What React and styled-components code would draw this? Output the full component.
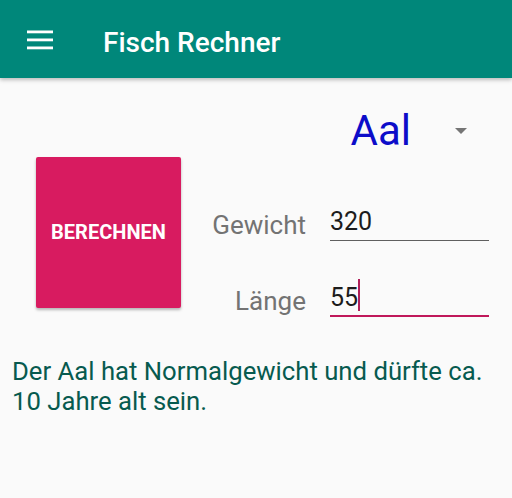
import React from 'react';
import styled, { createGlobalStyle } from 'styled-components';

const GlobalStyle = createGlobalStyle`
  html, body {
    margin: 0;
    padding: 0;
    background: #fafafa;
    font-family: Roboto, "Noto Sans", "Liberation Sans", sans-serif;
  }
`;

const Screen = styled.div`
  width: 512px;
  height: 498px;
  background: #fafafa;
  overflow: hidden;
`;

const AppBar = styled.header`
  display: flex;
  align-items: center;
  height: 78px;
  padding-left: 27px;
  box-sizing: border-box;
  background: #00877a;
  box-shadow: 0 2px 4px rgba(0, 0, 0, 0.25);
  position: relative;
`;

const MenuButton = styled.svg`
  display: block;
  width: 26px;
  height: 20px;
  margin-top: 1px;
`;

const Title = styled.h1`
  margin: 6px 0 0 50px;
  font-size: 28px;
  font-weight: 500;
  color: #ffffff;
`;

const Content = styled.main`
  padding: 28px 12px 0 12px;
`;

const SpinnerRow = styled.div`
  display: flex;
  justify-content: flex-end;
  align-items: center;
  height: 50px;
  padding-right: 33px;
`;

const SpinnerValue = styled.span`
  font-size: 42px;
  line-height: 50px;
  color: #0c0cc9;
`;

const Caret = styled.span`
  width: 0;
  height: 0;
  margin-left: 44px;
  border-left: 6px solid transparent;
  border-right: 6px solid transparent;
  border-top: 6px solid #757575;
`;

const FormRow = styled.div`
  display: flex;
  align-items: flex-start;
  margin-top: 1px;
  padding-left: 24px;
`;

const CalcButton = styled.button`
  width: 145px;
  height: 151px;
  border: none;
  border-radius: 2px;
  background: #d81b60;
  color: #ffffff;
  font-family: inherit;
  font-size: 20px;
  font-weight: 700;
  box-shadow: 0 2px 3px rgba(0, 0, 0, 0.28);
  padding: 0 0 2px 0;
`;

const Fields = styled.div`
  display: grid;
  grid-template-columns: 125px 159px;
  column-gap: 24px;
  row-gap: 42px;
  align-items: center;
  margin-top: 50px;
`;

const Label = styled.label`
  text-align: right;
  font-size: 26px;
  line-height: 30px;
  color: #737373;
  padding-top: 2px;
`;

const Input = styled.div`
  display: flex;
  align-items: flex-start;
  height: 30px;
  font-size: 25px;
  line-height: 30px;
  color: #1c1c1c;
  padding-bottom: ${p => (p.focused ? 2 : 3)}px;
  border-bottom: ${p => (p.focused ? '2px solid #c0185a' : '1px solid #5f5f5f')};
`;

const Cursor = styled.span`
  width: 2px;
  height: 32px;
  margin-top: -4px;
  background: #b0205a;
`;

const Result = styled.p`
  margin: 39px 0 0 0;
  font-size: 25.7px;
  line-height: 30px;
  color: #075a4f;
`;

const MenuIcon = () => (
  <MenuButton viewBox="0 0 26 20">
    <rect x="0" y="0.5" width="26" height="2.8" fill="#ffffff" />
    <rect x="0" y="8.5" width="26" height="2.8" fill="#ffffff" />
    <rect x="0" y="16.5" width="26" height="2.8" fill="#ffffff" />
  </MenuButton>
);

export default function App() {
  return (
    <Screen>
      <GlobalStyle />
      <AppBar>
        <MenuIcon />
        <Title>Fisch Rechner</Title>
      </AppBar>
      <Content>
        <SpinnerRow>
          <SpinnerValue>Aal</SpinnerValue>
          <Caret />
        </SpinnerRow>
        <FormRow>
          <CalcButton>BERECHNEN</CalcButton>
          <Fields>
            <Label>Gewicht</Label>
            <Input>320</Input>
            <Label>Länge</Label>
            <Input focused>
              55
              <Cursor />
            </Input>
          </Fields>
        </FormRow>
        <Result>Der Aal hat Normalgewicht und dürfte ca. 10 Jahre alt sein.</Result>
      </Content>
    </Screen>
  );
}
